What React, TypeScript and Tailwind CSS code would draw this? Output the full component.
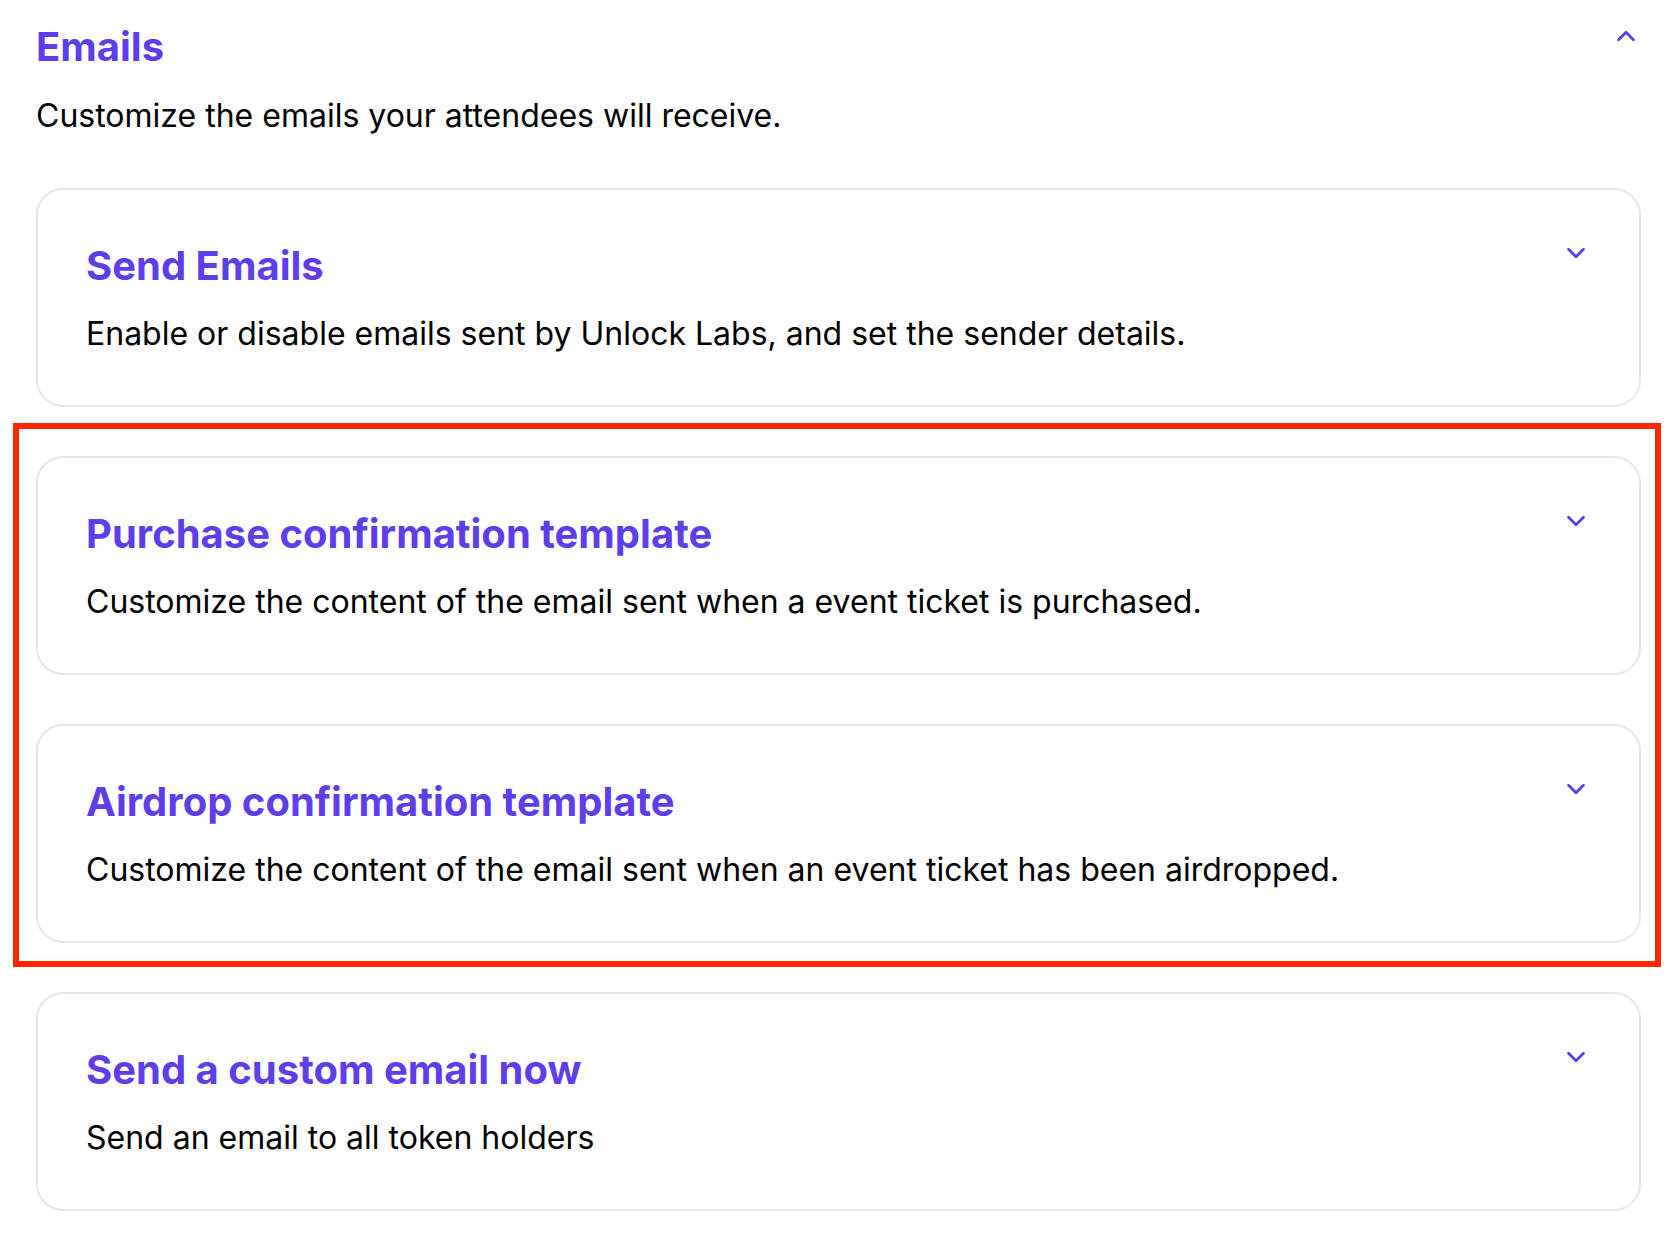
import { ChevronDown, ChevronUp } from 'lucide-react';

interface Section {
  id: string;
  title: string;
  description: string;
}

const first: Section = {
  id: 'send',
  title: 'Send Emails',
  description: 'Enable or disable emails sent by Unlock Labs, and set the sender details.',
};

// the two highlighted templates
const templates: Section[] = [
  {
    id: 'purchase',
    title: 'Purchase confirmation template',
    description: 'Customize the content of the email sent when a event ticket is purchased.',
  },
  {
    id: 'airdrop',
    title: 'Airdrop confirmation template',
    description: 'Customize the content of the email sent when an event ticket has been airdropped.',
  },
];

const last: Section = {
  id: 'custom',
  title: 'Send a custom email now',
  description: 'Send an email to all token holders',
};

function SectionCard({ section }: { section: Section }) {
  return (
    <div className="flex items-start justify-between rounded-[27px] border-2 border-[#e5e5ea] bg-white p-12">
      <div>
        <h3 className="text-[40px] leading-[56px] font-bold text-[#603deb]">{section.title}</h3>
        <p className="mt-[16px] text-[32px] leading-[47px] text-black">{section.description}</p>
      </div>
      <ChevronDown className="h-[30px] w-[30px] shrink-0 text-[#603deb]" strokeWidth={2.2} />
    </div>
  );
}

export default function App() {
  return (
    <main
      className="min-h-screen bg-white pl-[36px] pr-[33px] pt-[19px]"
      style={{ fontFamily: 'Inter, "Noto Sans", sans-serif' }}
    >
      {/* Header */}
      <div className="flex items-start justify-between">
        <div>
          <h2 className="text-[40px] leading-[56px] font-bold text-[#603deb]">Emails</h2>
          <p className="mt-[17px] text-[32px] leading-[48px] text-black">
            Customize the emails your attendees will receive.
          </p>
        </div>
        <ChevronUp className="mt-[2px] h-[30px] w-[30px] shrink-0 text-[#603deb]" strokeWidth={2.2} />
      </div>

      <div className="mt-[48px] flex flex-col gap-[49px]">
        <SectionCard section={first} />

        <div className="relative flex flex-col gap-[49px]">
          {templates.map((t) => (
            <SectionCard key={t.id} section={t} />
          ))}
          {/* annotation frame */}
          <div className="pointer-events-none absolute -top-[33px] -bottom-[24px] -left-[23px] -right-[20px] border-[6px] border-[#ff2600]" />
        </div>

        <SectionCard section={last} />
      </div>
    </main>
  );
}
